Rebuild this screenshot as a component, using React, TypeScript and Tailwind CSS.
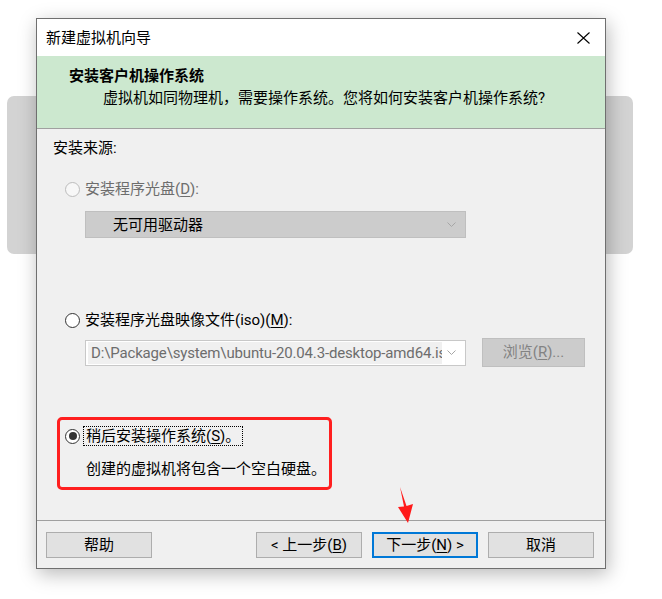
import React from "react";

function Radio({ checked = false, disabled = false }: { checked?: boolean; disabled?: boolean }) {
  return (
    <span
      className={
        "flex items-center justify-center w-[15px] h-[15px] rounded-full border shrink-0 " +
        (disabled ? "border-[#bcbcbc] bg-[#f7f7f7]" : "border-[#333333] bg-white")
      }
    >
      {checked && <span className="block w-[8px] h-[8px] rounded-full bg-[#333333]" />}
    </span>
  );
}

function Chevron({ color = "#a6a6a6" }: { color?: string }) {
  return (
    <svg width="9" height="5" viewBox="0 0 9 5" className="shrink-0">
      <path d="M0.5 0.5 L4.5 4.5 L8.5 0.5" fill="none" stroke={color} strokeWidth="1" />
    </svg>
  );
}

function Btn({ children, primary = false }: { children: React.ReactNode; primary?: boolean }) {
  return (
    <div
      className={
        "w-[106px] h-[26px] flex items-center justify-center bg-[#e1e1e1] leading-none " +
        (primary ? "border-2 border-[#0078d7]" : "border border-[#adadad]")
      }
    >
      {children}
    </div>
  );
}

export default function App() {
  return (
    <div className="relative w-[662px] h-[599px] bg-white overflow-hidden font-['Roboto','Noto_Sans_CJK_SC',sans-serif] text-[15px] text-black">
      {/* background window */}
      <div className="absolute left-[7px] top-[96px] w-[626px] h-[158px] rounded-[7px] bg-[#d3d3d3]" />

      {/* dialog */}
      <div className="absolute left-[36px] top-[18px] w-[570px] h-[551px] border border-[#6f6f6f] bg-[#f0f0f0] flex flex-col shadow-[2px_5px_18px_rgba(0,0,0,0.28)]">
        {/* title bar */}
        <div className="h-[37px] bg-white flex items-center justify-between pl-[9px] pr-[15px] shrink-0">
          <span className="leading-[20px]">新建虚拟机向导</span>
          <svg width="13" height="12" viewBox="0 0 13 12">
            <path d="M0.5 0.5 L12.5 11.5 M12.5 0.5 L0.5 11.5" stroke="#000" strokeWidth="1.1" fill="none" />
          </svg>
        </div>

        {/* header */}
        <div className="h-[73px] bg-[#cce8cf] border-b border-[#a0a0a0] shrink-0 pt-[10px] pl-[32px]">
          <div className="font-bold leading-[20px]">安装客户机操作系统</div>
          <div className="mt-[2px] pl-[34px] leading-[20px]">虚拟机如同物理机，需要操作系统。您将如何安装客户机操作系统?</div>
        </div>

        {/* body */}
        <div className="h-[391px] shrink-0 pl-[16px] pt-[9px] flex flex-col items-start">
          <div className="h-[20px] leading-[20px]">安装来源:</div>

          <div className="mt-[21px] h-[20px] ml-[12px] flex items-center gap-[5px] text-[#6d6d6d]">
            <Radio disabled />
            <span className="leading-[20px]">
              安装程序光盘(<span className="underline underline-offset-2">D</span>):
            </span>
          </div>

          <div className="mt-[12px] ml-[32px] w-[381px] h-[27px] bg-[#cccccc] border border-[#bfbfbf] flex items-center pl-[27px] pr-[9px]">
            <span className="flex-1 leading-[20px]">无可用驱动器</span>
            <Chevron />
          </div>

          <div className="mt-[72px] h-[20px] ml-[12px] flex items-center gap-[5px]">
            <Radio />
            <span className="leading-[20px]">
              安装程序光盘映像文件(iso)(<span className="underline underline-offset-2">M</span>):
            </span>
          </div>

          <div className="mt-[8px] ml-[32px] h-[29px] flex items-center gap-[16px]">
            <div className="w-[381px] h-[26px] bg-white border border-[#c8c8c8] flex items-center pl-[2px] pr-[9px]">
              <div className="w-[354px] h-[22px] bg-[#f0f0f0] overflow-hidden whitespace-nowrap text-[#6d6d6d] leading-[22px] pl-[3px] tracking-[-0.15px]">
                D:\Package\system\ubuntu-20.04.3-desktop-amd64.iso
              </div>
              <div className="flex-1" />
              <Chevron />
            </div>
            <div className="w-[103px] h-[29px] bg-[#cccccc] border border-[#bfbfbf] flex items-center justify-center text-[#838383] leading-none">
              浏览(<span className="underline underline-offset-2">R</span>)...
            </div>
          </div>

          <div className="mt-[50px] ml-[4px] w-[275px] h-[73px] border-[3px] border-[#ff1f1f] rounded-[5px] flex flex-col items-start pt-[6px] pl-[5px]">
            <div className="h-[20px] flex items-center gap-[3px]">
              <Radio checked />
              <span className="border border-dotted border-black px-[2px] leading-[18px]">
                稍后安装操作系统(<span className="underline underline-offset-2">S</span>)。
              </span>
            </div>
            <div className="mt-[13px] ml-[21px] h-[20px] leading-[20px]">创建的虚拟机将包含一个空白硬盘。</div>
          </div>
        </div>

        {/* footer */}
        <div className="h-[48px] shrink-0 border-t border-[#a0a0a0] pt-[11px] pl-[9px] pr-[11px] flex items-start">
          <Btn>帮助</Btn>
          <div className="flex-1" />
          <Btn>
            &lt; 上一步(<span className="underline underline-offset-2">B</span>)
          </Btn>
          <div className="w-[10px]" />
          <Btn primary>
            下一步(<span className="underline underline-offset-2">N</span>) &gt;
          </Btn>
          <div className="w-[10px]" />
          <Btn>取消</Btn>
        </div>
      </div>

      {/* red arrow annotation */}
      <svg className="absolute left-0 top-0" width="662" height="599" viewBox="0 0 662 599">
        <polygon points="400,487 406.5,506 413,504 408,523 398,507 404,506.5" fill="#ff1a1a" />
      </svg>
    </div>
  );
}
